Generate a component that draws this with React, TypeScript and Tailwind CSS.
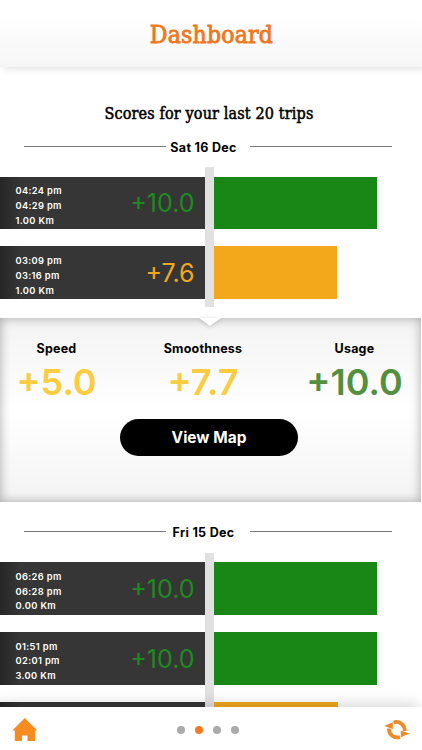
import React from 'react';

interface Trip {
    start?: string,
    end?: string,
    distance?: string,
    score?: string,
    color?: string,
    bar: string
}

interface DayProps {
    date: string,
    trips: Trip[]
}

const GREEN = { color: "text-[#1f8a1f]", bar: "bg-[#188716] w-[163px]" };

const saturday: Trip[] = [
    { start: "04:24 pm", end: "04:29 pm", distance: "1.00 Km", score: "+10.0", ...GREEN },
    { start: "03:09 pm", end: "03:16 pm", distance: "1.00 Km", score: "+7.6", color: "text-[#f3a81c]", bar: "bg-[#f3a81c] w-[123px]" },
];

// the last trip only peeks out above the footer
const friday: Trip[] = [
    { start: "06:26 pm", end: "06:28 pm", distance: "0.00 Km", score: "+10.0", ...GREEN },
    { start: "01:51 pm", end: "02:01 pm", distance: "3.00 Km", score: "+10.0", ...GREEN },
    { bar: "bg-[#f3a81c] w-[124px]" },
];

const Day = ({ date, trips }: DayProps) => {
    return (
        <section className="shrink-0">
            <div className="flex items-center h-5 pl-6 pr-[30px]">
                <div className="w-[142px] h-px bg-[#777]" />
                <h3 className="flex-1 pr-[9px] pt-[4px] text-center text-[12.5px] font-bold tracking-[0.3px] whitespace-nowrap">{date}</h3>
                <div className="w-[142px] h-px bg-[#777]" />
            </div>
            <div className="flex mt-[11.4px]">
                <div className="flex flex-col gap-[17px] w-[205px] pt-[9.2px] pb-2">
                    {trips.map((trip, i) => (
                        <div key={i} className="flex items-center justify-between h-[52.75px] pl-[15.5px] pr-[10.5px] bg-linear-to-r from-[#262626] to-[#363636] to-10%">
                            <div className="pt-[7px] text-[9.3px] leading-[14.7px] font-semibold tracking-[0.35px] text-white">
                                <p>{trip.start}</p>
                                <p>{trip.end}</p>
                                <p>{trip.distance}</p>
                            </div>
                            <span className={`pt-0.5 text-[25px] leading-none ${trip.color ?? ""}`}>{trip.score}</span>
                        </div>
                    ))}
                </div>
                <div className="w-[9px] bg-[#e1e1e1]" />
                <div className="flex flex-col gap-[17px] pt-[9.2px] pb-2">
                    {trips.map((trip, i) => (
                        <div key={i} className={`h-[52.75px] ${trip.bar}`} />
                    ))}
                </div>
            </div>
        </section>
    );
}

const Stat = ({ label, value, className }: { label: string, value: string, className: string }) => {
    return (
        <div className="flex flex-col items-center">
            <h4 className="text-[12.5px] leading-4 font-bold tracking-[0.2px]">{label}</h4>
            <p className={`mt-[6px] text-[36px] leading-[38px] font-semibold ${className}`}>{value}</p>
        </div>
    );
}

const TripDetails = () => {
    return (
        <section className="relative shrink-0 w-[421px] h-[184px] mt-[11.2px] pt-[22.500px] bg-linear-to-b from-[#f3f3f3] via-white via-50% to-[#f3f3f3] shadow-[inset_0_0_11px_rgba(0,0,0,0.32)]">
            <svg className="absolute left-[199px] top-0 drop-shadow-[0_1px_2px_rgba(0,0,0,0.2)]" width="22" height="9" viewBox="0 0 22 9">
                <path d="M0 0h22L11 8z" fill="#fff" />
            </svg>
            <div className="grid grid-cols-[113px_180px_123px]">
                <Stat label="Speed" value="+5.0" className="text-[#fbcb40]" />
                <Stat label="Smoothness" value="+7.7" className="text-[#fbcb40]" />
                <Stat label="Usage" value="+10.0" className="text-[#548f40]" />
            </div>
            <button className="block mt-[18px] ml-[120px] w-[178px] h-[37px] pt-px rounded-full bg-black text-[15.5px] font-bold text-white">View Map</button>
        </section>
    );
}

const App = () => {
    return (
        <div className="flex flex-col w-[422px] h-[750px] overflow-hidden bg-white text-black font-['Inter',sans-serif]">
            <header className="relative z-10 flex justify-center shrink-0 h-[67px] pt-[17px] bg-linear-to-b from-white from-20% to-[#f6f6f6] shadow-[4px_2px_7px_rgba(0,0,0,0.12)]">
                <h1 className="pl-px font-['DejaVu_Serif_Condensed','DejaVu_Serif',serif] text-[24.5px] leading-9 tracking-[0.2px] text-[#ef771c] [-webkit-text-stroke:0.8px_#ef771c]">Dashboard</h1>
            </header>
            <main className="flex flex-col flex-1 min-h-0 overflow-hidden">
                <h2 className="shrink-0 mt-9 pr-1 text-center font-['DejaVu_Serif_Condensed','DejaVu_Serif',serif] text-[16px] leading-[22px] tracking-[0.15px] [-webkit-text-stroke:0.5px_#000]">Scores for your last 20 trips</h2>
                <div className="shrink-0 h-[11px]" />
                <Day date="Sat 16 Dec" trips={saturday} />
                <TripDetails />
                <div className="shrink-0 h-[19.200px]" />
                <Day date="Fri 15 Dec" trips={friday} />
            </main>
            <footer className="relative z-10 flex items-center justify-between shrink-0 h-[43px] pl-3 pr-3 bg-white shadow-[-4px_-2px_16px_rgba(0,0,0,0.18)]">
                <svg className="mt-[3px]" width="26" height="24" viewBox="0 0 26 24" fill="#f68b1f">
                    <path d="M12.800 0L.3 12.500h2.500V23H10v-5.600h5.500V23H23V12.500h2.200z" />
                </svg>
                <div className="flex gap-[10px] pt-[3px] mr-[7px]">
                    <span className="size-2 rounded-full bg-[#aaa]" />
                    <span className="size-2 rounded-full bg-[#f37a20]" />
                    <span className="size-2 rounded-full bg-[#aaa]" />
                    <span className="size-2 rounded-full bg-[#aaa]" />
                </div>
                <svg className="mt-[2px]" width="26" height="22" viewBox="0 0 26 22">
                    <path d="M4.900 9.500A8.500 8.500 0 0 0 16 18M9.600 3.400A8.500 8.500 0 0 1 20.700 12" fill="none" stroke="#f08a24" strokeWidth="3.700" />
                    <path d="M.2 7L8.800 3.200v6.800zM25.400 14.500L16.800 18.200v-6.800z" fill="#f08a24" />
                </svg>
            </footer>
        </div>
    );
}

export default App;
